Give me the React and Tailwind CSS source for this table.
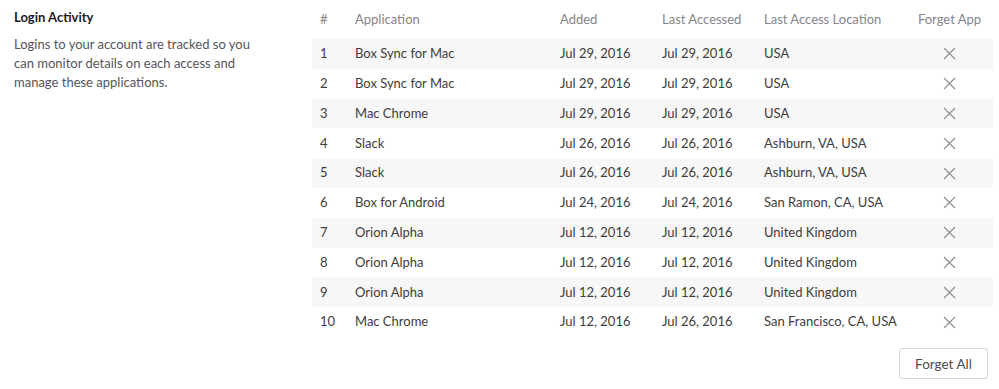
import React from "react";

const rows = [
  ["1", "Box Sync for Mac", "Jul 29, 2016", "Jul 29, 2016", "USA"],
  ["2", "Box Sync for Mac", "Jul 29, 2016", "Jul 29, 2016", "USA"],
  ["3", "Mac Chrome", "Jul 29, 2016", "Jul 29, 2016", "USA"],
  ["4", "Slack", "Jul 26, 2016", "Jul 26, 2016", "Ashburn, VA, USA"],
  ["5", "Slack", "Jul 26, 2016", "Jul 26, 2016", "Ashburn, VA, USA"],
  ["6", "Box for Android", "Jul 24, 2016", "Jul 24, 2016", "San Ramon, CA, USA"],
  ["7", "Orion Alpha", "Jul 12, 2016", "Jul 12, 2016", "United Kingdom"],
  ["8", "Orion Alpha", "Jul 12, 2016", "Jul 12, 2016", "United Kingdom"],
  ["9", "Orion Alpha", "Jul 12, 2016", "Jul 12, 2016", "United Kingdom"],
  ["10", "Mac Chrome", "Jul 12, 2016", "Jul 26, 2016", "San Francisco, CA, USA"],
];

const cols = "grid grid-cols-[43px_205px_102px_102px_1fr_80px] items-center";

const XIcon = () => (
  <svg width="13" height="13" viewBox="0 0 13 13" className="inline-block">
    <path d="M1 1L12 12M12 1L1 12" stroke="#8f8f94" strokeWidth="1.2" fill="none" />
  </svg>
);

const App = () => {
  return (
    <div className="w-[999px] h-[389px] bg-white flex font-['Lato',sans-serif] text-[13px] overflow-hidden">
      <div className="w-[312px] pl-[14px] pr-[50px] pt-[9px]">
        <div className="font-bold text-[#1d1c1f] leading-[17px]">Login Activity</div>
        <p className="mt-[9px] leading-[19px] text-[#555459]">
          Logins to your account are tracked so you can monitor details on each access and manage these
          applications.
        </p>
      </div>
      <div className="w-[681px] flex flex-col">
        <div className={`${cols} h-[39px] text-[#86858a]`}>
          <div className="pl-[8px]">#</div>
          <div>Application</div>
          <div>Added</div>
          <div>Last Accessed</div>
          <div>Last Access Location</div>
          <div className="text-center pr-[7px] whitespace-nowrap">Forget App</div>
        </div>
        {rows.map((r, i) => (
          <div
            key={r[0]}
            className={`${cols} h-[29.8px] text-[#3d3c40] ${i % 2 === 0 ? "bg-[#f7f7f7]" : "bg-white"}`}
          >
            <div className="pl-[8px]">{r[0]}</div>
            <div>{r[1]}</div>
            <div>{r[2]}</div>
            <div>{r[3]}</div>
            <div className="whitespace-nowrap">{r[4]}</div>
            <div className="text-center pr-[7px] flex justify-center">
              <XIcon />
            </div>
          </div>
        ))}
        <div className="flex justify-end pr-[5px] mt-[11px]">
          <button className="w-[89px] h-[31px] pt-[2px] border border-[#d6d6d8] rounded-[3px] bg-white text-[#4d4c50] text-[13.5px]">
            Forget All
          </button>
        </div>
      </div>
    </div>
  );
};

export default App;
